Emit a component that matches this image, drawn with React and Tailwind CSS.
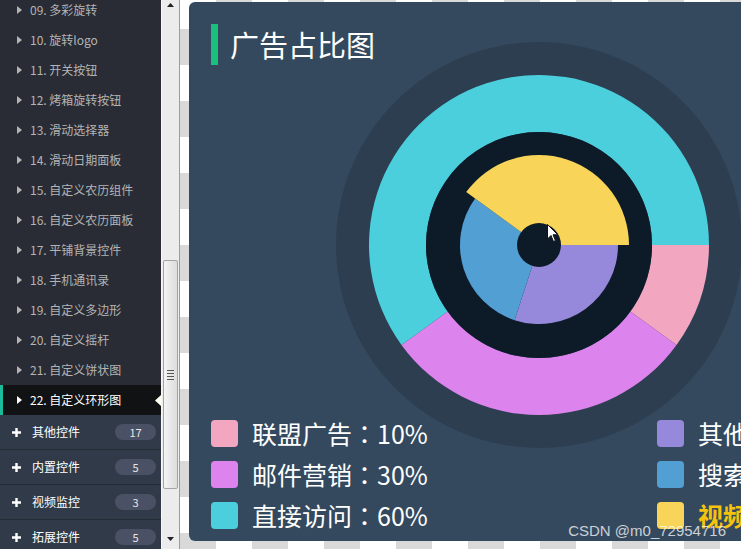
import React from 'react';

const FONT = "font-['Noto_Sans_CJK_SC','Noto_Sans',sans-serif]";

// --- sidebar data ---
const items = [
  '09. 多彩旋转',
  '10. 旋转logo',
  '11. 开关按钮',
  '12. 烤箱旋转按钮',
  '13. 滑动选择器',
  '14. 滑动日期面板',
  '15. 自定义农历组件',
  '16. 自定义农历面板',
  '17. 平铺背景控件',
  '18. 手机通讯录',
  '19. 自定义多边形',
  '20. 自定义摇杆',
  '21. 自定义饼状图',
  '22. 自定义环形图',
];

const groups = [
  { name: '其他控件', count: 17 },
  { name: '内置控件', count: 5 },
  { name: '视频监控', count: 3 },
  { name: '拓展控件', count: 5 },
];

// --- chart geometry ---
const cx = 350;
const cy = 243;

function pt(r, a) {
  const rad = (a * Math.PI) / 180;
  return [cx + r * Math.cos(rad), cy + r * Math.sin(rad)];
}

function ring(r0, r1, a0, a1) {
  const large = a1 - a0 > 180 ? 1 : 0;
  const [x1, y1] = pt(r1, a0);
  const [x2, y2] = pt(r1, a1);
  if (r0 === 0) {
    return `M${cx} ${cy} L${x1} ${y1} A${r1} ${r1} 0 ${large} 1 ${x2} ${y2} Z`;
  }
  const [x3, y3] = pt(r0, a1);
  const [x4, y4] = pt(r0, a0);
  return `M${x1} ${y1} A${r1} ${r1} 0 ${large} 1 ${x2} ${y2} L${x3} ${y3} A${r0} ${r0} 0 ${large} 0 ${x4} ${y4} Z`;
}

const outer = [
  { color: '#f3a6c0', a0: 0, a1: 36 },
  { color: '#dd83ee', a0: 36, a1: 144 },
  { color: '#4bcfdc', a0: 144, a1: 360 },
];

const inner = [
  { color: '#9689dc', a0: 0, a1: 108, r: 79 },
  { color: '#529fd4', a0: 108, a1: 216, r: 79 },
  { color: '#f8d558', a0: 216, a1: 360, r: 90 },
];

const legendLeft = [
  { color: 'bg-[#f3a6c0]', name: '联盟广告', value: '10%' },
  { color: 'bg-[#dd83ee]', name: '邮件营销', value: '30%' },
  { color: 'bg-[#4bcfdc]', name: '直接访问', value: '60%' },
];

const legendRight = [
  { color: 'bg-[#9689dc]', name: '其他广告', value: '30%' },
  { color: 'bg-[#529fd4]', name: '搜索引擎', value: '30%' },
  { color: 'bg-[#f8d558]', name: '视频广告', value: '40%', active: true },
];

function Caret({ active }) {
  return (
    <svg width="5" height="8" viewBox="0 0 5 8" className="shrink-0">
      <path d="M0 0 L5 4 L0 8 Z" fill={active ? '#ffffff' : '#b4b4b4'} />
    </svg>
  );
}

function Plus() {
  return (
    <svg width="9" height="9" viewBox="0 0 9 9" className="shrink-0">
      <path d="M4.5 0 V9 M0 4.5 H9" stroke="#ffffff" strokeWidth="2.4" />
    </svg>
  );
}

function Sidebar() {
  return (
    <div className="w-[161px] h-full bg-[#292c35] flex flex-col overflow-hidden shrink-0">
      <div className="-mt-[5px] flex flex-col">
        {items.map((label, i) => {
          const active = i === items.length - 1;
          return (
            <div
              key={label}
              className={
                active
                  ? 'relative h-[30px] flex items-center bg-[#111214] border-l-[3px] border-[#1abc9c] pl-[14px]'
                  : 'h-[30px] flex items-center pl-[17px]'
              }
            >
              <Caret active={active} />
              <span
                className={
                  active
                    ? 'ml-[8px] text-[12px] text-white'
                    : 'ml-[8px] text-[12px] text-[#b4b4b4]'
                }
              >
                {label}
              </span>
              {active && (
                <svg width="6" height="11" viewBox="0 0 6 11" className="ml-auto">
                  <path d="M6 0 L0 5.5 L6 11 Z" fill="#fffdf2" />
                </svg>
              )}
            </div>
          );
        })}
      </div>
      {groups.map((g) => (
        <div
          key={g.name}
          className="h-[35px] shrink-0 flex items-center bg-[#303a48] border-b border-[#232a34] pl-[12px] pr-[5px]"
        >
          <Plus />
          <span className="ml-[11px] text-[12px] text-white">{g.name}</span>
          <span className="ml-auto w-[41px] h-[16px] rounded-full bg-[#4a5164] text-[#e6e6e6] text-[11px] flex items-center justify-center">
            {g.count}
          </span>
        </div>
      ))}
    </div>
  );
}

function Scrollbar() {
  return (
    <div className="w-[19px] h-full bg-[#ececec] border-l border-[#f8f8f8] border-r border-r-[#9c9c9c] flex flex-col shrink-0">
      <div className="h-[17px] flex items-start justify-center pt-[3px]">
        <svg width="7" height="4" viewBox="0 0 7 4">
          <path d="M0 4 L3.5 0 L7 4 Z" fill="#222" />
        </svg>
      </div>
      <div className="flex-1 flex flex-col">
        <div className="mt-[243px] ml-[1px] w-[15px] h-[229px] rounded-[2px] border border-[#a4a4a4] bg-[linear-gradient(90deg,#f4f4f4,#dcdcdc)] flex flex-col items-center justify-center gap-[2px]">
          <div className="w-[7px] h-px bg-[#555]" />
          <div className="w-[7px] h-px bg-[#555]" />
          <div className="w-[7px] h-px bg-[#555]" />
          <div className="w-[7px] h-px bg-[#555]" />
        </div>
      </div>
      <div className="h-[12px] flex items-start justify-center">
        <svg width="7" height="4" viewBox="0 0 7 4">
          <path d="M0 0 L3.5 4 L7 0 Z" fill="#222" />
        </svg>
      </div>
    </div>
  );
}

function Chart() {
  return (
    <svg width="700" height="539" viewBox="0 0 700 539" className="col-start-1 row-start-1">
      <circle cx={cx} cy={cy} r="203" fill="#2d3e51" />
      {outer.map((s) => (
        <path key={s.color} d={ring(113, 170, s.a0, s.a1)} fill={s.color} />
      ))}
      <circle cx={cx} cy={cy} r="113" fill="#0d1b29" />
      {inner.map((s) => (
        <path key={s.color} d={ring(0, s.r, s.a0, s.a1)} fill={s.color} />
      ))}
      <circle cx={cx} cy={cy} r="22" fill="#0d1b29" />
    </svg>
  );
}

function LegendRow({ color, name, value, active }) {
  return (
    <div className="h-[27px] flex items-center">
      <div className={`w-[27px] h-[27px] rounded-[4px] shrink-0 ${color}`} />
      <span
        className={
          active
            ? 'ml-[14px] text-[25px] leading-[27px] font-bold text-[#f5c20f] whitespace-nowrap'
            : 'ml-[14px] text-[25px] leading-[27px] text-white whitespace-nowrap'
        }
      >
        {name}
        {/* centred full-width colon, as the TC font draws it */}
        <span className="font-['Noto_Sans_CJK_TC',sans-serif]">：</span>
        {value}
      </span>
    </div>
  );
}

export default function App() {
  return (
    <div className={`relative w-[741px] h-[549px] flex overflow-hidden ${FONT}`}>
      <Sidebar />
      <Scrollbar />

      {/* checkerboard stage */}
      <div className="flex-1 h-full overflow-hidden bg-[repeating-conic-gradient(#d9d9d9_0_25%,#ffffff_0_50%)] bg-[length:72px_72px] bg-[position:0_-7px] pl-[9px] pt-[2px]">
        <div className="w-[700px] h-[539px] rounded-[6px] bg-[#34495e] grid grid-cols-1 grid-rows-1">
          <Chart />
          <div className="col-start-1 row-start-1 flex flex-col justify-between pt-[22px] pb-[12px] pl-[22px]">
            <div className="flex items-center">
              <div className="w-[7px] h-[41px] bg-[#19c07e]" />
              <span className="ml-[12px] text-[29px] leading-[41px] text-white">广告占比图</span>
            </div>
            <div className="flex">
              <div className="w-[446px] flex flex-col gap-[14px]">
                {legendLeft.map((l) => (
                  <LegendRow key={l.name} {...l} />
                ))}
              </div>
              <div className="flex flex-col gap-[14px]">
                {legendRight.map((l) => (
                  <LegendRow key={l.name} {...l} />
                ))}
              </div>
            </div>
          </div>
        </div>
      </div>

      {/* mouse pointer over the chart */}
      <svg width="12" height="19" viewBox="0 0 12 19" className="absolute left-[547px] top-[224px]">
        <path d="M0.5 0.5 L0.5 15 L4 11.5 L6.5 17.5 L8.5 16.6 L6 10.8 L10.8 10.8 Z" fill="#ffffff" stroke="#111" strokeWidth="1" />
      </svg>

      {/* watermark */}
      <div className="absolute right-[15px] bottom-[9px] text-[15px] leading-[18px] text-white/75 font-['Liberation_Sans',sans-serif]">
        CSDN @m0_72954716
      </div>
    </div>
  );
}
